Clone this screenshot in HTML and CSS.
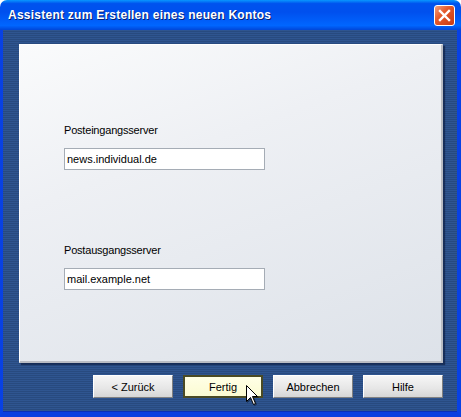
FILE: index.html
```html
<!DOCTYPE html>
<html lang="de">
<head>
  <meta charset="UTF-8" />
  <title>Assistent zum Erstellen eines neuen Kontos</title>
  <link rel="stylesheet" href="styles.css">
</head>
<body>
  <div class="window">
    <div class="titlebar">
      <span class="title">Assistent zum Erstellen eines neuen Kontos</span>
      <button class="close" aria-label="Schließen">
        <svg width="13" height="13" viewBox="0 0 13 13"><path d="M2 2 L11 11 M11 2 L2 11" stroke="#fff" stroke-width="2.4" stroke-linecap="square"/></svg>
      </button>
    </div>
    <div class="frame">
      <div class="panel">
        <div class="field">
          <label for="incoming">Posteingangsserver</label>
          <input type="text" id="incoming" value="news.individual.de">
        </div>
        <div class="field second">
          <label for="outgoing">Postausgangsserver</label>
          <input type="text" id="outgoing" value="mail.example.net">
        </div>
      </div>
      <div class="buttons">
        <button class="btn">&lt; Zurück</button>
        <button class="btn default">Fertig</button>
        <button class="btn">Abbrechen</button>
        <button class="btn">Hilfe</button>
      </div>
    </div>
    <svg class="cursor" width="14" height="22" viewBox="0 0 14 22">
      <path d="M1.5 1.5 L1.5 17.5 L5.5 13.5 L8.5 20.5 L10.5 19.5 L7.5 12.5 L12.5 12.5 Z" fill="#fff" stroke="#000" stroke-width="1" stroke-linejoin="miter"/>
    </svg>
  </div>
</body>
</html>
```

FILE: styles.css
```css
body { margin: 0; background: #fff; font-family: 'Liberation Sans', Arial, sans-serif; }
.window { width: 461px; height: 417px; display: flex; flex-direction: column; position: relative; overflow: hidden; }

.titlebar { height: 30px; display: flex; align-items: center; justify-content: space-between; padding: 0 6px 0 8px; box-sizing: border-box; border-radius: 7px 7px 0 0; background: linear-gradient(to bottom, #0997ff 0%, #0053ee 12%, #0050ee 40%, #0066ff 85%, #0046d8 100%); }
.title { color: #fff; font-weight: 700; font-size: 12px; letter-spacing: 0.25px; text-shadow: 1px 1px 0 #0a1e6e; }
.close { width: 21px; height: 21px; padding: 0; border: 1px solid #fff; border-radius: 3px; background: linear-gradient(135deg, #f0a080 0%, #e45a2c 40%, #c83a12 100%); display: flex; align-items: center; justify-content: center; }

.frame { flex: 1; display: flex; flex-direction: column; padding: 14px 14px 14px 16px; border-left: 3px solid #0841e4; border-right: 4px solid #0841e4; border-bottom: 5px solid #0a3fe0; box-shadow: inset 0 -1px 0 #0a2fb8; background: repeating-linear-gradient(to bottom, #2f5590 0, #2f5590 1px, #284a7f 1px, #284a7f 2px); }

.panel { height: 319px; box-sizing: border-box; padding: 78px 0 0 44px; border-top: 1px solid #fff; border-left: 1px solid #fff; border-right: 2px solid #b9bcc3; border-bottom: 2px solid #b9bcc3; background: linear-gradient(160deg, #fafbfc 0%, #eef0f4 35%, #dde2e9 100%); box-shadow: 2px 2px 1px rgba(10, 25, 60, 0.6); }
.field { display: flex; flex-direction: column; align-items: flex-start; }
.field.second { margin-top: 73px; }
label { font-size: 11px; line-height: 14px; letter-spacing: -0.2px; color: #000; margin-bottom: 11px; }
input[type='text'] { width: 201px; height: 22px; box-sizing: border-box; margin: 0; padding: 1px 2px; border: 1px solid #a5acb5; background: #fff; font-family: 'Liberation Sans', Arial, sans-serif; font-size: 11px; color: #000; outline: none; }

.buttons { display: flex; justify-content: flex-end; gap: 10px; margin-top: 12px; }
.btn { width: 80px; height: 23px; padding: 0; font-family: 'Liberation Sans', Arial, sans-serif; font-size: 11px; color: #000; border: 1px solid; border-color: #fff #808080 #808080 #fff; background: linear-gradient(to bottom, #f6f6f6 0%, #e6e6e6 60%, #d6d6d6 100%); }
.btn.default { border: 2px solid #4a4a24; background: linear-gradient(to bottom, #ffffe6 0%, #fbfbd2 100%); }

.cursor { position: absolute; left: 245px; top: 384px; filter: drop-shadow(1px 1px 0 rgba(0, 0, 0, 0.35)); }
```
